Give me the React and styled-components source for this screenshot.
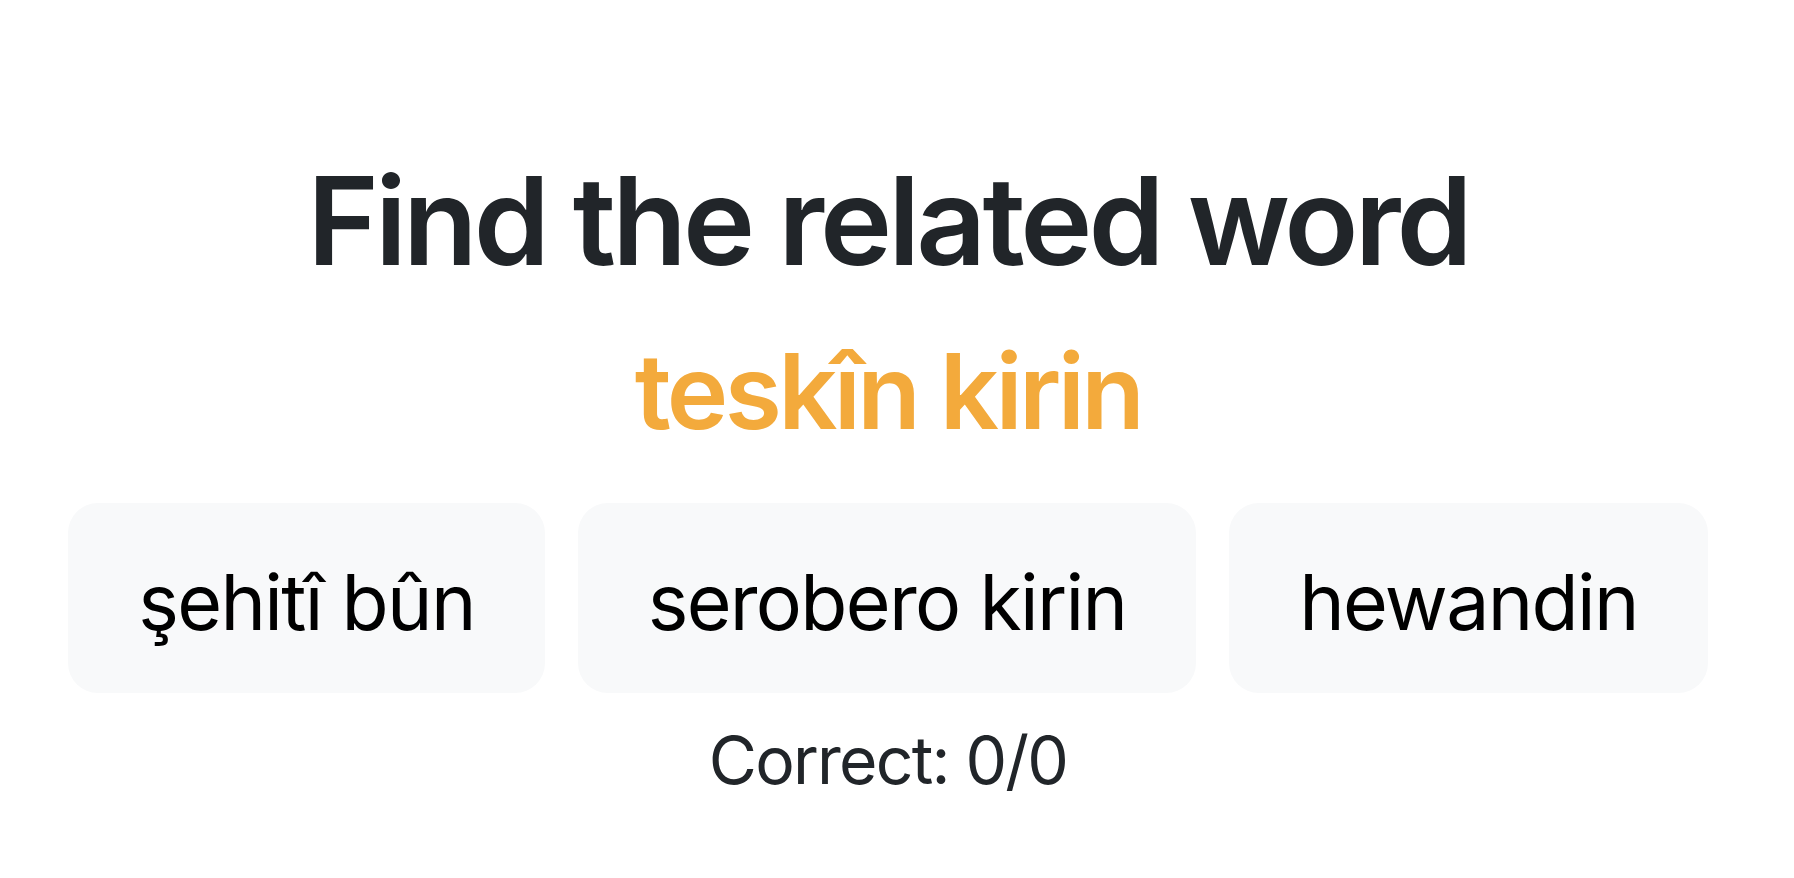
import React from "react";
import styled, { createGlobalStyle } from "styled-components";

const Global = createGlobalStyle`
  html, body { margin: 0; padding: 0; background: #ffffff; }
  body { font-family: Inter, Roboto, "Liberation Sans", Arial, sans-serif; }
`;

const Page = styled.main`
  display: flex;
  flex-direction: column;
  align-items: center;
  padding: 148px 18px 0 0;
  box-sizing: border-box;
  min-height: 100vh;
`;

const Title = styled.h1`
  margin: 0;
  font-size: 122px;
  font-weight: 600;
  line-height: 1.2;
  letter-spacing: -0.032em;
  color: #212529;
  text-align: center;
`;

const Word = styled.h2`
  margin: 35px 0 0;
  font-size: 104px;
  font-weight: 600;
  line-height: 1.2;
  letter-spacing: -0.035em;
  color: #f3aa3c;
  text-align: center;
`;

const Options = styled.div`
  display: flex;
  justify-content: center;
  gap: 33px;
  margin-top: 49px;
`;

const Option = styled.button`
  appearance: none;
  border: none;
  background: #f8f9fa;
  border-radius: 30px;
  height: 190px;
  box-sizing: border-box;
  padding: 53px 70px 45px;
  font-family: inherit;
  font-size: 77px;
  font-weight: 400;
  line-height: 1.2;
  letter-spacing: -0.022em;
  color: #000000;
  cursor: pointer;
  white-space: nowrap;
`;

const Score = styled.p`
  margin: 28px 0 0;
  font-size: 66px;
  font-weight: 400;
  line-height: 1.2;
  letter-spacing: -0.027em;
  color: #212529;
`;

export default function App() {
  const options = ["şehitî bûn", "serobero kirin", "hewandin"];
  return (
    <>
      <Global />
      <Page>
        <Title>Find the related word</Title>
        <Word>teskîn kirin</Word>
        <Options>
          {options.map((o) => (
            <Option key={o}>{o}</Option>
          ))}
        </Options>
        <Score>Correct: 0/0</Score>
      </Page>
    </>
  );
}
